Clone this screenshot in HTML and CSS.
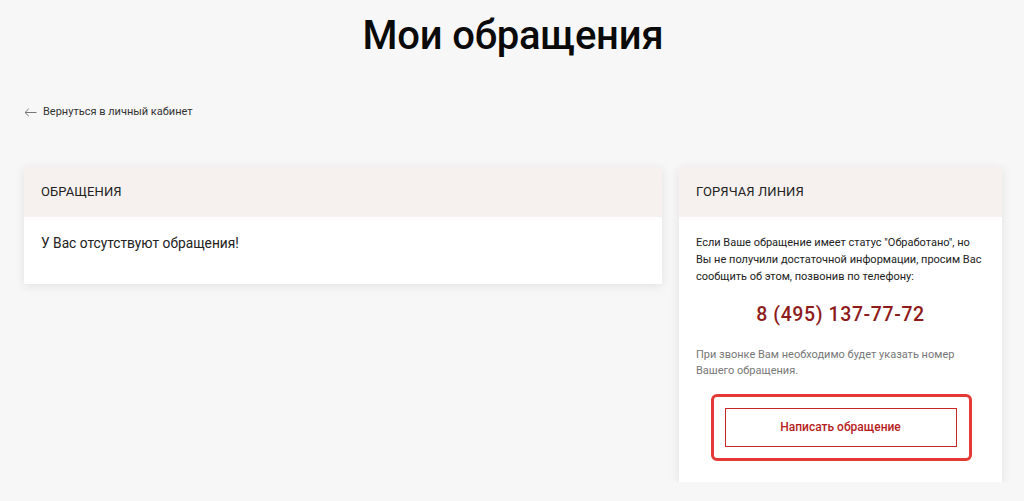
FILE: index.html
```html
<!DOCTYPE html>
<html lang="ru">
<head>
<meta charset="utf-8">
<title>Мои обращения</title>
<link rel="stylesheet" href="styles.css">
</head>
<body>
<main class="page">
  <h1 class="title">Мои обращения</h1>
  <a class="back" href="#">
    <svg class="back-icon" width="13" height="9" viewBox="0 0 13 9"><path d="M12.5 4.5H1M4.8 0.8L1 4.5l3.8 3.7" fill="none" stroke="#777" stroke-width="1"/></svg>
    <span>Вернуться в личный кабинет</span>
  </a>
  <div class="columns">
    <section class="card card-main">
      <div class="card-head">ОБРАЩЕНИЯ</div>
      <div class="card-body main-body">У Вас отсутствуют обращения!</div>
    </section>
    <section class="card card-side">
      <div class="card-head">ГОРЯЧАЯ ЛИНИЯ</div>
      <div class="card-body side-body">
        <p class="info">Если Ваше обращение имеет статус "Обработано", но Вы не получили достаточной информации, просим Вас сообщить об этом, позвонив по телефону:</p>
        <div class="phone">8 (495) 137-77-72</div>
        <p class="note">При звонке Вам необходимо будет указать номер Вашего обращения.</p>
        <div class="btn-wrap">
          <a class="btn" href="#">Написать обращение</a>
          <span class="highlight"></span>
        </div>
      </div>
    </section>
  </div>
</main>
</body>
</html>
```

FILE: styles.css
```css
html, body {
  margin: 0;
  padding: 0;
  background: #f7f7f7;
  font-family: Roboto, "Liberation Sans", Arial, sans-serif;
  color: #222;
}
.page {
  padding: 12px 22px 0 24px;
}
.title {
  margin: 0;
  text-align: center;
  font-size: 40px;
  line-height: 48px;
  font-weight: 500;
  color: #0a0a0a;
  letter-spacing: -0.2px;
}
.back {
  display: inline-flex;
  align-items: center;
  gap: 6px;
  margin-top: 44px;
  height: 16px;
  text-decoration: none;
  color: #333;
  font-size: 11px;
  line-height: 16px;
}
.back-icon {
  display: block;
}
.columns {
  display: grid;
  grid-template-columns: 638px 323px;
  column-gap: 17px;
  align-items: start;
  margin-top: 46px;
}
.card {
  background: #fff;
  box-shadow: 0 2px 10px rgba(0, 0, 0, 0.09);
}
.card-head {
  height: 50px;
  display: flex;
  align-items: center;
  padding: 0 17px;
  background: #f6f1ee;
  font-size: 13px;
  color: #222;
  letter-spacing: 0.1px;
}
.main-body {
  padding: 16px 17px 31px;
  font-size: 13.75px;
  line-height: 20px;
  color: #222;
}
.side-body {
  padding: 17px 17px 35px;
}
.info {
  margin: 0;
  font-size: 11px;
  line-height: 17px;
  color: #222;
}
.phone {
  margin-top: 18px;
  text-align: center;
  font-size: 19.5px;
  line-height: 24px;
  font-weight: 500;
  color: #8e1b1b;
  letter-spacing: 0.6px;
}
.note {
  margin: 20px 0 0;
  font-size: 11px;
  line-height: 16px;
  color: #777;
}
.btn-wrap {
  position: relative;
  display: flex;
  justify-content: center;
  margin-top: 29px;
}
.btn {
  width: 232px;
  height: 39px;
  box-sizing: border-box;
  border: 1px solid #c62828;
  display: flex;
  align-items: center;
  justify-content: center;
  text-decoration: none;
  color: #b71c1c;
  font-size: 12px;
  font-weight: 500;
}
.highlight {
  position: absolute;
  left: 15px;
  top: -14px;
  width: 261px;
  height: 67px;
  box-sizing: border-box;
  border: 3px solid #e53935;
  border-radius: 6px;
  pointer-events: none;
}
```
